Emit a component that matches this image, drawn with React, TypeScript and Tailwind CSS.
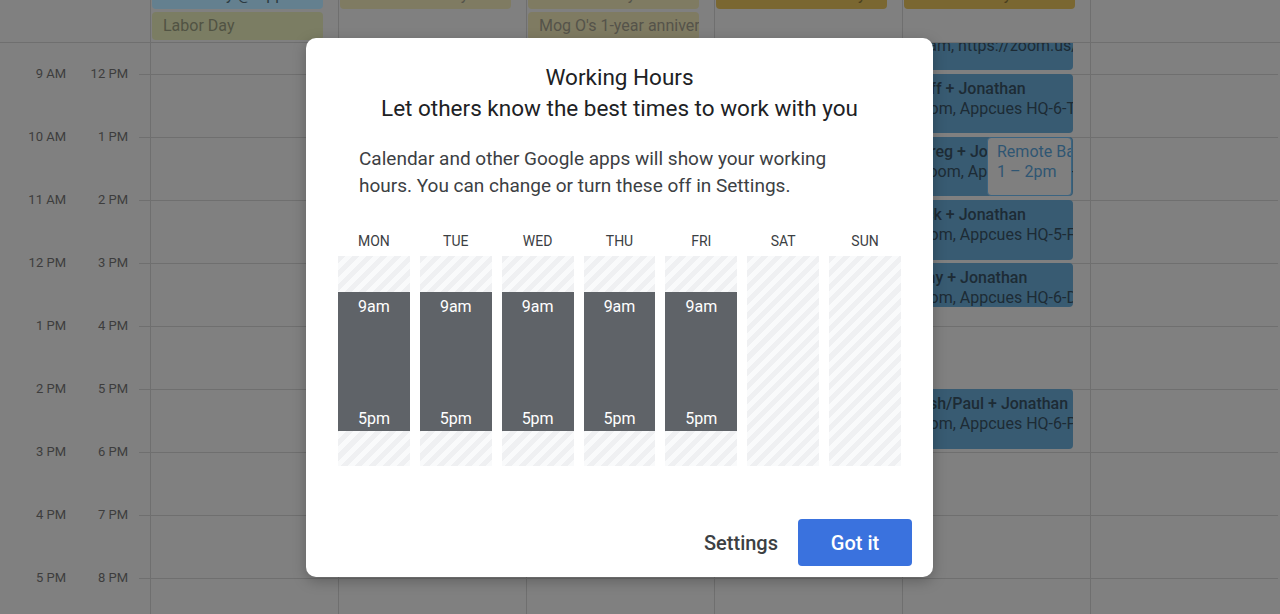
const days = ["MON", "TUE", "WED", "THU", "FRI", "SAT", "SUN"];
const working = [true, true, true, true, true, false, false];

const leftHours = ["9 AM", "10 AM", "11 AM", "12 PM", "1 PM", "2 PM", "3 PM", "4 PM", "5 PM"];
const rightHours = ["12 PM", "1 PM", "2 PM", "3 PM", "4 PM", "5 PM", "6 PM", "7 PM", "8 PM"];

// all-day chips per column (already dimmed by the dialog backdrop)
const allDay: { label: string; color: string; text: string }[][] = [
  [
    { label: "Team Day @ Appcues", color: "bg-[#64808f]", text: "text-[#2c3a42]" },
    { label: "Labor Day", color: "bg-[#7b7d63]", text: "text-[#515343]" },
  ],
  [{ label: "Bernie's birthday", color: "bg-[#7f7b62]", text: "text-[#55534a]" }],
  [
    { label: "Kat's birthday", color: "bg-[#7f7b62]", text: "text-[#55534a]" },
    { label: "Mog O's 1-year anniversary", color: "bg-[#7f7b62]", text: "text-[#55534a]" },
  ],
  [{ label: "Jonathan's birthday", color: "bg-[#7a6731]", text: "text-[#4a3f1e]" }],
  [{ label: "Pat's birthday", color: "bg-[#7a6731]", text: "text-[#4a3f1e]" }],
  [],
];

const events = [
  { top: "top-[-32px]", h: "h-[59px]", pad: "pl-[8px]", title: "Weekly sync", sub: "Team, https://zoom.us/j/8812" },
  { top: "top-[31px]", h: "h-[59px]", pad: "pl-[8px]", title: "Duff + Jonathan", sub: "Zoom, Appcues HQ-6-Terrace" },
  { top: "top-[94px]", h: "h-[59px]", pad: "pl-[16px]", title: "Greg + Jonathan", sub: "Zoom, Appcues HQ-6-Library" },
  { top: "top-[157px]", h: "h-[60px]", pad: "pl-[8px]", title: "Rick + Jonathan", sub: "Zoom, Appcues HQ-5-Fusion" },
  { top: "top-[220px]", h: "h-[44px]", pad: "pl-[8px]", title: "Amy + Jonathan", sub: "Zoom, Appcues HQ-6-Dock" },
  { top: "top-[346px]", h: "h-[60px]", pad: "pl-[8px]", title: "Josh/Paul + Jonathan", sub: "Zoom, Appcues HQ-6-Patio" },
];

function Calendar() {
  return (
    <div className="flex h-[614px] w-[1280px] flex-col overflow-hidden bg-[#808080] font-['Roboto',sans-serif]">
      {/* all-day row */}
      <div className="flex h-[43px] shrink-0 border-b border-[#6f6f6f]">
        <div className="w-[150px] shrink-0" />
        {allDay.map((chips, i) => (
          <div key={i} className="w-[188px] shrink-0 border-l border-[#6f6f6f] pl-[1px] pr-[15px]">
            <div className="mt-[-19px] flex flex-col gap-[3px]">
              {chips.map((c) => (
                <div
                  key={c.label}
                  className={`h-[28px] overflow-hidden whitespace-nowrap rounded-[4px] px-[11px] text-[16px] leading-[28px] ${c.color} ${c.text}`}
                >
                  {c.label}
                </div>
              ))}
            </div>
          </div>
        ))}
      </div>

      {/* hour grid */}
      <div className="flex flex-1 overflow-hidden">
        <div className="flex w-[150px] shrink-0 flex-col">
          <div className="h-[31px] shrink-0" />
          {leftHours.map((h, i) => (
            <div key={h} className="flex h-[63px] shrink-0 items-start">
              <div className="w-[66px] -translate-y-1/2 text-right text-[13px] leading-[18px] text-[#3d3d3d]">{h}</div>
              <div className="w-[62px] -translate-y-1/2 text-right text-[13px] leading-[18px] text-[#3d3d3d]">
                {rightHours[i]}
              </div>
              <div className="ml-auto w-[11px] border-t border-[#6f6f6f]" />
            </div>
          ))}
        </div>
        {allDay.map((_, col) => (
          <div key={col} className="relative flex w-[188px] shrink-0 flex-col border-l border-[#6f6f6f]">
            <div className="h-[31px] shrink-0" />
            {leftHours.map((h) => (
              <div key={h} className="h-[63px] shrink-0 border-t border-[#6f6f6f]" />
            ))}
            {col === 4 &&
              events.map((e) => (
                <div
                  key={e.title}
                  className={`absolute left-0 w-[170px] overflow-hidden whitespace-nowrap rounded-[4px] bg-[#385b72] pt-[5px] text-[16px] leading-[20px] text-[#1d2b35] ${e.top} ${e.h} ${e.pad}`}
                >
                  <div className="font-medium">{e.title}</div>
                  <div>{e.sub}</div>
                </div>
              ))}
            {col === 4 && (
              <div className="absolute left-[84px] top-[94px] h-[59px] w-[85px] overflow-hidden whitespace-nowrap rounded-[4px] border border-[#3b6481] bg-[#7f7f7f] pl-[9px] pt-[4px] text-[16px] leading-[20px] text-[#2f5673]">
                <div>Remote Battle</div>
                <div>1 – 2pm</div>
              </div>
            )}
          </div>
        ))}
      </div>
    </div>
  );
}

function WorkingHoursDialog() {
  return (
    <div className="absolute left-[306px] top-[38px] flex h-[539px] w-[627px] flex-col rounded-[10px] bg-white font-['Roboto',sans-serif] shadow-[0_4px_14px_rgba(0,0,0,0.25)]">
      <div className="pt-[24px] text-center text-[22.5px] leading-[31px] text-[#202124]">
        <div>Working Hours</div>
        <div>Let others know the best times to work with you</div>
      </div>

      <p className="mt-[21px] px-[53px] text-[19px] leading-[27px] text-[#3c4043]">
        Calendar and other Google apps will show your working
        <br />
        hours. You can change or turn these off in Settings.
      </p>

      <div className="mt-[32px] grid grid-cols-7 gap-x-[10px] px-[32px]">
        {days.map((d, i) => (
          <div key={d} className="flex flex-col">
            <div className="mb-[5px] text-center text-[14px] leading-[20px] text-[#3c4043]">{d}</div>
            <div className="flex h-[210px] flex-col bg-[image:repeating-linear-gradient(135deg,#eff0f2_0px,#eff0f2_5px,#f9fafb_5px,#f9fafb_10px)]">
              {working[i] && (
                <div className="mt-[36px] flex h-[139px] flex-col justify-between bg-[#5f6368] pb-[2px] pt-[5px] text-center text-[16px] leading-[20px] text-white">
                  <span>9am</span>
                  <span>5pm</span>
                </div>
              )}
            </div>
          </div>
        ))}
      </div>

      <div className="mt-auto flex items-center justify-end gap-[20px] pb-[11px] pr-[21px]">
        <button className="text-[20px] font-medium text-[#3c4043]">Settings</button>
        <button className="h-[47px] w-[114px] rounded-[4px] bg-[#3a72de] text-[20px] font-medium text-white">
          Got it
        </button>
      </div>
    </div>
  );
}

export default function App() {
  return (
    <div className="relative h-[614px] w-[1280px] overflow-hidden">
      <Calendar />
      <WorkingHoursDialog />
    </div>
  );
}
